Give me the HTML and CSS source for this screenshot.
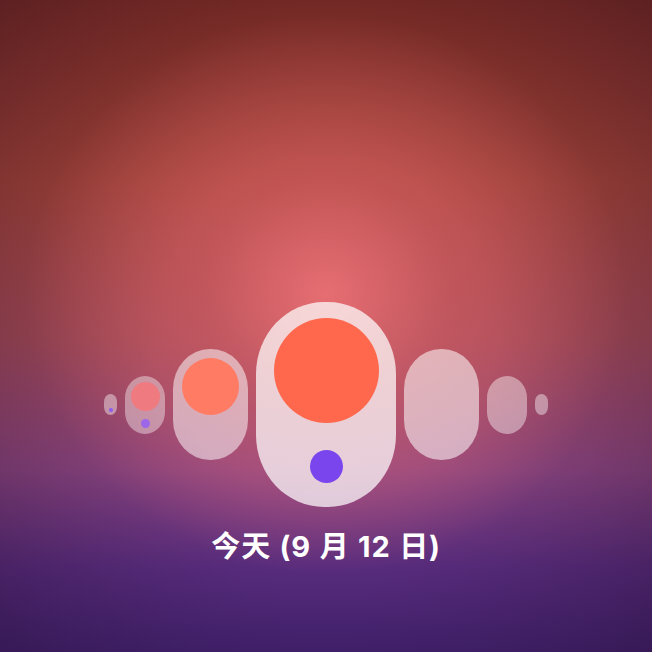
FILE: index.html
```html
<!DOCTYPE html>
<html lang="zh-CN">
<head>
<meta charset="utf-8">
<title>今天</title>
<link rel="stylesheet" href="styles.css">
</head>
<body>
<main class="screen">
  <div class="pills">
    <div class="pill pill-xs pill-bottom"><span class="dot dot-xs"></span></div>
    <div class="pill pill-sm"><span class="ring ring-sm"></span><span class="dot dot-sm"></span></div>
    <div class="pill pill-md"><span class="ring ring-md"></span></div>
    <div class="pill pill-lg"><span class="ring ring-lg"></span><span class="dot dot-lg"></span></div>
    <div class="pill pill-md pill-right"></div>
    <div class="pill pill-sm pill-right"></div>
    <div class="pill pill-xs pill-right"></div>
  </div>
  <p class="date">今天 (9 月 12 日)</p>
</main>
</body>
</html>
```
FILE: styles.css
```css
html, body {
  margin: 0;
  padding: 0;
}
body {
  width: 652px;
  height: 652px;
  overflow: hidden;
}
.screen {
  width: 652px;
  height: 652px;
  box-sizing: border-box;
  padding-top: 302px;
  display: flex;
  flex-direction: column;
  align-items: center;
  background:
    radial-gradient(ellipse 300px 280px at 50% 45%, rgba(234,112,116,0.95) 0%, rgba(218,98,104,0.55) 40%, rgba(200,90,100,0) 100%),
    radial-gradient(ellipse 480px 480px at 50% 50%, rgba(0,0,0,0) 35%, rgba(25,5,25,0.42) 100%),
    linear-gradient(to bottom, #8a3228 0%, #a6453a 28%, #a24a58 52%, #8e4784 72%, #5f3088 87%, #4a277e 100%);
  font-family: "Inter", "Noto Sans CJK SC", sans-serif;
}
.pills {
  display: flex;
  align-items: center;
  gap: 8px;
  height: 205px;
}
.pill {
  display: flex;
  flex-direction: column;
  align-items: center;
  box-sizing: border-box;
}
.pill-xs {
  width: 13px;
  height: 21px;
  border-radius: 6.5px / 8px;
  background: rgba(255,255,255,0.42);
}
.pill-bottom {
  justify-content: flex-end;
  padding-bottom: 3px;
}
.pill-sm {
  width: 40px;
  height: 58px;
  border-radius: 20px / 22px;
  padding-top: 6px;
  gap: 8px;
  background: rgba(255,255,255,0.4);
}
.pill-md {
  width: 75px;
  height: 111px;
  border-radius: 37px / 40px;
  padding-top: 9px;
  background: rgba(255,255,255,0.52);
}
.pill-lg {
  width: 140px;
  height: 205px;
  border-radius: 68px / 72px;
  padding-top: 16px;
  gap: 27px;
  background: rgba(255,255,255,0.72);
}
.pill-right.pill-md { background: rgba(255,255,255,0.55); }
.pill-right.pill-sm { background: rgba(255,255,255,0.42); }
.pill-right.pill-xs { background: rgba(255,255,255,0.42); }
.ring, .dot {
  display: block;
  border-radius: 50%;
  flex: none;
}
.ring-lg { width: 105px; height: 105px; background: #ff684c; }
.ring-md { width: 57px; height: 57px; background: #ff7b63; }
.ring-sm { width: 29px; height: 29px; background: #ef7a80; }
.dot-lg { width: 33px; height: 33px; background: #7b45ee; }
.dot-sm { width: 9px; height: 9px; background: #9c67e8; }
.dot-xs { width: 4px; height: 4px; background: #8d5cf0; }
.date {
  margin: 22px 0 0;
  color: #ffffff;
  font-size: 29px;
  font-weight: 700;
  line-height: 36px;
  letter-spacing: 0.8px;
  word-spacing: 1px;
}
```
